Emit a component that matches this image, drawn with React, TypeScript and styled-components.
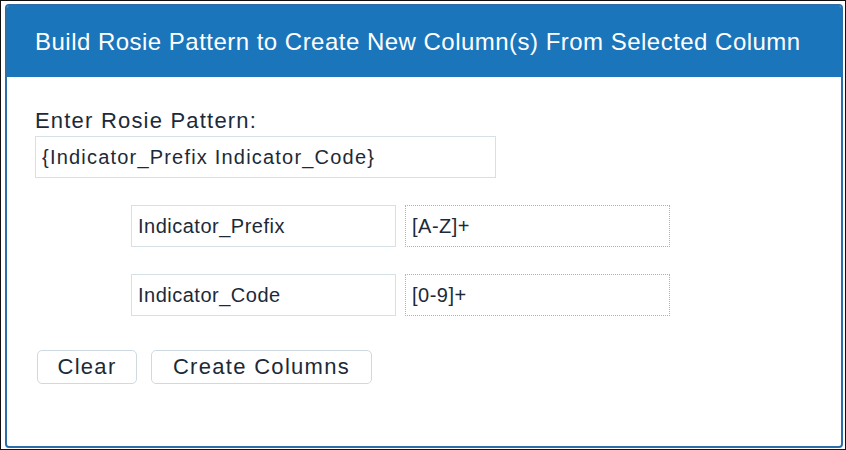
import React from "react";
import styled, { createGlobalStyle } from "styled-components";

const GlobalStyle = createGlobalStyle`
  html, body {
    margin: 0;
    padding: 0;
    background: #fff;
  }
  body {
    font-family: "Liberation Sans", Arial, sans-serif;
  }
`;

const Frame = styled.div`
  box-sizing: border-box;
  width: 846px;
  height: 450px;
  border: 1px solid #111;
  padding: 3px 2px 1px 4px;
  background: #fff;
`;

const Panel = styled.div`
  box-sizing: border-box;
  height: 100%;
  border: 2px solid #2d6ea6;
  border-radius: 4px;
  overflow: hidden;
  display: flex;
  flex-direction: column;
`;

const Header = styled.header`
  height: 71px;
  flex: 0 0 auto;
  background: #1a75bb;
  display: flex;
  align-items: center;
  padding-left: 28px;
`;

const Title = styled.h1`
  margin: 0;
  color: #fff;
  font-size: 24px;
  font-weight: 400;
  letter-spacing: 0.48px;
`;

const Body = styled.div`
  padding: 30px 28px;
  display: flex;
  flex-direction: column;
  color: #1c2a38;
`;

const Label = styled.label`
  font-size: 22px;
  line-height: 27px;
  letter-spacing: 1.2px;
`;

const TextField = styled.div<{ $width: number; $dashed?: boolean; $spacing?: number }>`
  box-sizing: border-box;
  width: ${(p) => p.$width}px;
  height: 42px;
  border: 1px ${(p) => (p.$dashed ? "dotted #a9b3bb" : "solid #d5e0e7")};
  display: flex;
  align-items: center;
  padding-left: 6px;
  font-size: 20px;
  letter-spacing: ${(p) => p.$spacing ?? 0.5}px;
  color: #1c2a38;
`;

const PatternRow = styled.div`
  margin-top: 2px;
`;

const Grid = styled.div`
  margin-top: 27px;
  margin-left: 96px;
  display: grid;
  grid-template-columns: 265px 265px;
  column-gap: 9px;
  row-gap: 27px;
`;

const Actions = styled.div`
  margin-top: 34px;
  margin-left: 2px;
  display: flex;
  gap: 14px;
`;

const Button = styled.button<{ $width: number }>`
  box-sizing: border-box;
  width: ${(p) => p.$width}px;
  height: 34px;
  border: 1px solid #cfd9e0;
  border-radius: 5px;
  background: #fff;
  font-family: "Liberation Sans", Arial, sans-serif;
  font-size: 22px;
  letter-spacing: 1.3px;
  color: #1c2a38;
  padding: 0;
`;

const rules = [
  { name: "Indicator_Prefix", pattern: "[A-Z]+" },
  { name: "Indicator_Code", pattern: "[0-9]+" },
];

function App() {
  return (
    <>
      <GlobalStyle />
      <Frame>
        <Panel>
          <Header>
            <Title>Build Rosie Pattern to Create New Column(s) From Selected Column</Title>
          </Header>
          <Body>
            <Label>Enter Rosie Pattern:</Label>
            <PatternRow>
              <TextField $width={461} $spacing={1.2}>
                {"{Indicator_Prefix Indicator_Code}"}
              </TextField>
            </PatternRow>
            <Grid>
              {rules.map((r) => (
                <React.Fragment key={r.name}>
                  <TextField $width={265}>{r.name}</TextField>
                  <TextField $width={265} $dashed>
                    {r.pattern}
                  </TextField>
                </React.Fragment>
              ))}
            </Grid>
            <Actions>
              <Button $width={100}>Clear</Button>
              <Button $width={221}>Create Columns</Button>
            </Actions>
          </Body>
        </Panel>
      </Frame>
    </>
  );
}

export default App;
